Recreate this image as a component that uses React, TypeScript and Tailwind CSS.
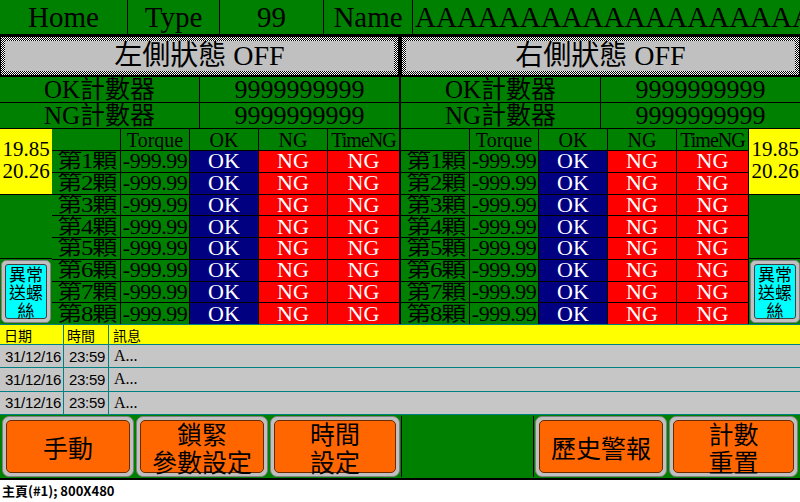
import React from "react";

// HMI main page (800x480) with caption strip below

const rows = [1, 2, 3, 4, 5, 6, 7, 8];

function StatusButton({ label }: { label: string }) {
  return (
    <div className="flex-1 bg-[image:repeating-conic-gradient(#000_0%_25%,#fff_0%_50%)] bg-[length:2px_2px] p-[4px]">
      <div className="h-full bg-[#c0c0c0] flex items-center justify-center text-[28px] leading-none text-black">
        {label}
      </div>
    </div>
  );
}

function Counters() {
  return (
    <div className="grid grid-cols-[199px_1fr] grid-rows-[25px_25px] gap-px bg-black">
      <div className="bg-[#008000] flex items-center justify-center text-[25px] leading-none">OK計數器</div>
      <div className="bg-[#008000] flex items-center justify-center text-[26px] leading-none">9999999999</div>
      <div className="bg-[#008000] flex items-center justify-center text-[25px] leading-none">NG計數器</div>
      <div className="bg-[#008000] flex items-center justify-center text-[26px] leading-none">9999999999</div>
    </div>
  );
}

function ScrewTable() {
  return (
    <div className="w-[347px] grid grid-cols-[68px_68px_68px_68px_1fr] grid-rows-[21px_repeat(8,minmax(0,1fr))] gap-px bg-black">
      <div className="bg-[#008000]" />
      <div className="bg-[#008000] flex items-center justify-center text-[20px] leading-none">Torque</div>
      <div className="bg-[#008000] flex items-center justify-center text-[20px] leading-none">OK</div>
      <div className="bg-[#008000] flex items-center justify-center text-[20px] leading-none">NG</div>
      <div className="bg-[#008000] flex items-center justify-center text-[20px] leading-none tracking-[-1px] overflow-hidden">TimeNG</div>
      {rows.map((n) => (
        <React.Fragment key={n}>
          <div className="bg-[#008000] flex items-center justify-center leading-none overflow-hidden min-h-0">
            <span className="inline-block text-[20px] leading-none tracking-[-1px] scale-x-[1.25]">第{n}顆</span>
          </div>
          <div className="bg-[#008000] flex items-center justify-center text-[22px] leading-none tracking-[-0.5px] min-h-0">-999.99</div>
          <div className="bg-[#000080] flex items-center justify-center text-[22px] leading-none text-white min-h-0">OK</div>
          <div className="bg-[#ff0000] flex items-center justify-center text-[22px] leading-none text-white min-h-0">NG</div>
          <div className="bg-[#ff0000] flex items-center justify-center text-[22px] leading-none text-white min-h-0">NG</div>
        </React.Fragment>
      ))}
    </div>
  );
}

function SideColumn() {
  return (
    <div className="w-[52px] flex flex-col gap-px bg-black">
      <div className="h-[65px] bg-[#ffff00] flex flex-col items-center justify-start pt-[9px] text-[21px] leading-[22px]">
        <span>19.85</span>
        <span>20.26</span>
      </div>
      <div className="flex-1 bg-[#008000]" />
      <div className="h-[65px] bg-[#008000] p-px">
        <div className="h-full rounded-[5px] bg-[#c0c0c0] border border-[#808080] p-[3px]">
          <div className="h-full rounded-[3px] bg-[#00ffff] border border-[#404040] flex flex-col items-center justify-center text-[17px] leading-[18px] font-['Noto_Sans_CJK_TC',sans-serif]">
            <span>異常</span>
            <span>送螺</span>
            <span>絲</span>
          </div>
        </div>
      </div>
    </div>
  );
}

const logRows = [0, 1, 2];

function AlarmLog() {
  return (
    <div className="h-[89px] flex flex-col bg-[#008080] gap-px">
      <div className="h-[19px] bg-[#ffff00] grid grid-cols-[64px_45px_1fr]">
        <div className="flex items-center pl-[4px] text-[14px] leading-none font-['Noto_Sans_CJK_TC',sans-serif] border-r border-[#008080]">日期</div>
        <div className="flex items-center pl-[3px] text-[14px] leading-none font-['Noto_Sans_CJK_TC',sans-serif] border-r border-[#008080]">時間</div>
        <div className="flex items-center pl-[4px] text-[14px] leading-none font-['Noto_Sans_CJK_TC',sans-serif]">訊息</div>
      </div>
      {logRows.map((i) => (
        <div key={i} className="flex-1 bg-[#c6c6c6] grid grid-cols-[64px_45px_1fr]">
          <div className="flex items-center pl-[5px] text-[15px] leading-none font-['Liberation_Sans',sans-serif] tracking-[-0.3px] border-r border-[#008080]">31/12/16</div>
          <div className="flex items-center pl-[5px] text-[15px] leading-none font-['Liberation_Sans',sans-serif] tracking-[-0.3px] border-r border-[#008080]">23:59</div>
          <div className="flex items-center pl-[5px] text-[16px] leading-none">A...</div>
        </div>
      ))}
    </div>
  );
}

function OrangeButton({ lines }: { lines: string[] }) {
  return (
    <div className="h-full rounded-[7px] bg-[#c0c0c0] border border-[#808080] p-[3px]">
      <div className="h-full rounded-[5px] bg-[#ff6600] border border-[#6b2a00] flex flex-col items-center justify-center text-[25px] leading-[28px] font-['Noto_Sans_CJK_TC',sans-serif]">
        {lines.map((l) => (
          <span key={l}>{l}</span>
        ))}
      </div>
    </div>
  );
}

export default function App() {
  return (
    <div className="w-[800px] h-[502px] bg-white overflow-hidden font-['Liberation_Serif','Noto_Sans_CJK_TC',serif] text-black">
      <div className="h-[480px] bg-black flex flex-col">
        {/* top bar */}
        <div className="h-[34px] shrink-0 grid grid-cols-[127px_91px_103px_88px_1fr] gap-px">
          <div className="bg-[#008000] flex items-center justify-center text-[29px] leading-none">Home</div>
          <div className="bg-[#008000] flex items-center justify-center text-[29px] leading-none">Type</div>
          <div className="bg-[#008000] flex items-center justify-center text-[29px] leading-none">99</div>
          <div className="bg-[#008000] flex items-center justify-center text-[29px] leading-none">Name</div>
          <div className="bg-[#008000] flex items-center pl-[2px] text-[29px] leading-none overflow-hidden whitespace-nowrap">
            AAAAAAAAAAAAAAAAAAAA
          </div>
        </div>

        {/* status buttons */}
        <div className="h-[41px] shrink-0 mt-[2px] flex gap-[4px] px-px pt-px pb-[2px]">
          <StatusButton label="左側狀態 OFF" />
          <StatusButton label="右側狀態 OFF" />
        </div>

        {/* counters */}
        <div className="h-[52px] shrink-0 flex gap-[2px] pb-px">
          <div className="flex-1">
            <Counters />
          </div>
          <div className="flex-1">
            <Counters />
          </div>
        </div>

        {/* screw tables */}
        <div className="h-[195px] shrink-0 flex gap-[2px]">
          <div className="flex">
            <SideColumn />
            <ScrewTable />
          </div>
          <div className="flex gap-px">
            <ScrewTable />
            <SideColumn />
          </div>
        </div>

        {/* alarm log */}
        <div className="shrink-0 border-t border-[#008080]">
          <AlarmLog />
        </div>

        {/* bottom buttons */}
        <div className="flex-1 min-h-0 bg-[#008000] mb-[2px] grid grid-cols-[134px_134px_132px_133px_134px_1fr] p-px border-t border-[#008080]">
          <div className="px-px min-h-0">
            <OrangeButton lines={["手動"]} />
          </div>
          <div className="px-px min-h-0">
            <OrangeButton lines={["鎖緊", "參數設定"]} />
          </div>
          <div className="px-px min-h-0">
            <OrangeButton lines={["時間", "設定"]} />
          </div>
          <div className="border-x border-black" />
          <div className="px-px min-h-0">
            <OrangeButton lines={["歷史警報"]} />
          </div>
          <div className="px-px min-h-0">
            <OrangeButton lines={["計數", "重置"]} />
          </div>
        </div>
      </div>
      <div className="h-[22px] flex items-center pl-[2px] text-[13px] font-bold font-['Noto_Sans_CJK_TC',sans-serif]">
        主頁(#1); 800X480
      </div>
    </div>
  );
}
